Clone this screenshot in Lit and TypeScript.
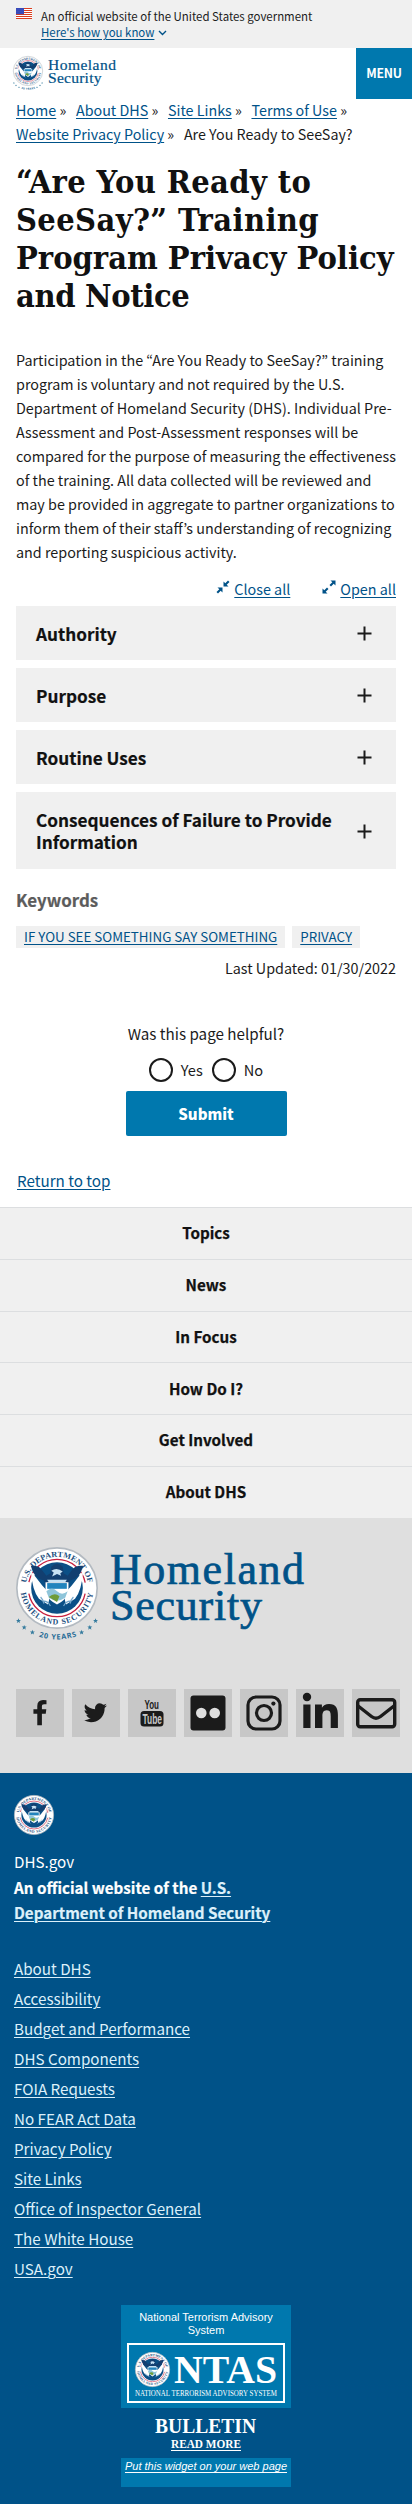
import { LitElement, html, svg, css } from "lit";
import { customElement, property } from "lit/decorators.js";

@customElement("dhs-seal")
class DhsSeal extends LitElement {
  @property({ type: Boolean }) plain = false;

  static styles = css`
    :host { display: block; }
    svg { display: block; width: 100%; height: auto; overflow: visible; }
    .ring { font: 700 9.6px "Liberation Serif", serif; fill: #1b4f80; }
    .years { font: 700 9px "Noto Sans", sans-serif; fill: #2a6d97; }
  `;

  render() {
    return html`<svg viewBox="0 0 100 ${this.plain ? 100 : 118}" aria-label="Department of Homeland Security seal">
      <defs>
        <path id="top" d="M12 50 A38 38 0 0 1 88 50" />
        <path id="bottom" d="M5.5 50 A44.5 44.5 0 0 0 94.5 50" />
        <path id="low" d="M22 107.5 Q50 118 78 107.5" />
      </defs>
      <circle cx="50" cy="50" r="49" fill="#fff" stroke="#b3bac1" stroke-width="2" />
      <text class="ring"><textPath href="#top" startOffset="6" textLength="107" lengthAdjust="spacingAndGlyphs">U.S. DEPARTMENT OF</textPath></text>
      <text class="ring"><textPath href="#bottom" startOffset="6" textLength="127">HOMELAND SECURITY</textPath></text>
      <circle cx="50" cy="50" r="35" fill="#fff" stroke="#c8203f" stroke-width="1.6" stroke-dasharray="96 14" stroke-dashoffset="-7" />
      <circle cx="50" cy="50" r="31.5" fill="#0b4f86" />
      <path d="M18 29 L32 47 L42 58 L39 70 L28 63 Q20 54 18 29Z M82 29 L68 47 L58 58 L61 70 L72 63 Q80 54 82 29Z" fill="#fff" />
      <path d="M18 23 Q22 39 34 41 L39 51 L61 51 L66 41 Q78 39 82 23 Q73 22 69 27 L63 35 L58 32 L57 24 Q50 17 43 24 L42 32 L37 35 L31 27 Q27 22 18 23Z" fill="#123f70" />
      <path d="M43 29 Q50 24 57 30 L54 32 L55 35 L50 33 L44 36 L46 31Z M38 40 h24 l-2 3 h-20z" fill="#c7e2f4" />
      <path d="M36 43 H64 V55 Q60 66 50 70 Q40 66 36 55Z" fill="#fff" />
      <path d="M38 44 H62 V51 H38Z" fill="#2284bd" />
      <path d="M37 54 Q44 48 50 54 T63 54 L60 62 Q50 69 40 62Z" fill="#8fc5da" />
      <path d="M40 61 Q47 55 53 60 L50 67Z" fill="#6f9c38" />
      <path d="M34 66 q5 0 8 6 M66 66 q-5 0 -8 6 M30 61 q3 3 4 8 M70 61 q-3 3 -4 8" fill="none" stroke="#73a6cb" stroke-width="1.4" />
      ${this.plain ? "" : svg`
        <g fill="#357b9e">
          ${[[3, 90], [10, 98], [20, 104], [80, 104], [90, 98], [97, 90]].map(([x, y]) => svg`
            <path transform="translate(${x} ${y})" d="M0-3 .8-1H3L1.3.5 2 2.8 0 1.5-2 2.8-1.3.5-3-1H-.8Z" />`)}
        </g>
        <text class="years"><textPath href="#low" startOffset="6" textLength="47">20 YEARS</textPath></text>`}
    </svg>`;
  }
}

@customElement("app-root")
class AppRoot extends LitElement {
  static styles = css`
    :host {
      display: block;
      width: 412px;
      height: 2504px;
      overflow: hidden;
      background: #fff;
      color: #1b1b1b;
      font: 15.2px/24px "Noto Sans CJK KR", "Noto Sans", sans-serif;
    }
    * { box-sizing: border-box; }
    a { color: #005288; text-decoration: underline; text-underline-offset: 2px; text-decoration-thickness: 1px; }
    h1, h2, p, ul { margin: 0; padding: 0; }
    svg { display: block; overflow: visible; }

    .banner { display: flex; height: 48px; padding: 8px 16px; gap: 9px; background: #f0f0f0; font-size: 11.45px; line-height: 16px; }
    .flag { width: 16px; height: 11px; }
    .know { display: flex; gap: 4px; align-items: center; }
    .know svg { margin-top: 2px; }

    header { display: flex; justify-content: space-between; height: 51px; padding-left: 13px; }
    .brand { display: flex; gap: 4px; padding-top: 8px; }
    .brand dhs-seal { width: 30px; }
    .brandtext { font-family: "Liberation Serif", serif; fill: #005288; stroke: #005288; }
    .menu { display: flex; align-items: center; justify-content: center; width: 56px; height: 51px; padding-bottom: 1px; background: #0078ae; color: #fff; font-weight: 700; font-size: 12.3px; letter-spacing: -.2px; }

    .crumbs { display: flex; flex-wrap: wrap; column-gap: 9.7px; height: 48px; margin: -1.2px 0 0; padding-left: 16px; font-size: 14.3px; }

    h1 { margin-top: 16.8px; padding-left: 16px; font: 700 32.3px/38.2px "DejaVu Serif Condensed", "DejaVu Serif", serif; font-stretch: condensed; color: #111; white-space: nowrap; }
    h1 span { display: block; }
    .wide { letter-spacing: .38px; }
    .tight { letter-spacing: -.35px; }
    .intro { margin: 32.4px 0 0; padding-left: 16px; font-size: 14.35px; white-space: nowrap; }
    .intro span { display: block; }

    .tools { display: flex; justify-content: flex-end; gap: 32px; height: 42.2px; padding: 13px 16px 0 0; font-size: 14.35px; }
    .tools a { display: flex; gap: 4px; align-items: center; height: 24px; text-decoration: none; }
    .tools span { text-decoration: underline; }
    .tools svg { margin-top: -4px; }

    .accordion { display: grid; gap: 8px; margin: 0 16px; }
    .item { display: flex; align-items: center; justify-content: space-between; height: 54px; padding: 1px 24px 0 20px; background: #f0f0f0; color: #111; font-size: 17.2px; line-height: 22px; font-weight: 700; white-space: nowrap; -webkit-text-stroke: .2px #111; }
    .item.tall { height: 77px; }

    .keywords { margin: 19px 16px 0; color: #5c5c5c; font-weight: 700; font-size: 16.9px; line-height: 24px; -webkit-text-stroke: .2px #5c5c5c; }
    .tags { display: flex; gap: 7px; margin: 14px 16px 0; }
    .tag { height: 22px; padding: 0 8px; background: #f0f0f0; font-size: 13.35px; line-height: 21px; white-space: nowrap; }
    .updated { margin: 8px 16px 0; font-size: 14.35px; text-align: right; }
    .helpful { display: flex; flex-direction: column; align-items: center; margin-top: 40.5px; }
    .radios { display: flex; align-items: center; gap: 9px; height: 30px; margin-top: 10.5px; }
    .radio { display: flex; align-items: center; gap: 8px; font-size: 14.6px; }
    .dot { width: 24px; height: 24px; border: 2px solid #1b1b1b; border-radius: 50%; }
    .submit { width: 161px; height: 45px; margin-top: 6px; border: 0; border-radius: 2px; background: #0078ae; color: #fff; font: 900 15px/45px "Noto Sans CJK KR", sans-serif; padding: 0; }
    .return { margin: 31.5px 0 0 17px; height: 39.5px; }

    .nav a { display: flex; align-items: center; justify-content: center; height: 51.75px; padding-bottom: 2px; border-top: 1px solid #dcdee0; background: #f0f0f0; color: #111; text-decoration: none; font-weight: 700; font-size: 15.2px; -webkit-text-stroke: .25px #111; }

    .agency { height: 255.5px; padding: 29px 16px 0; background: #dfdfdf; }
    .lockup { display: flex; gap: 12px; height: 142.5px; }
    .lockup dhs-seal { width: 82px; }
    .social { display: flex; gap: 8px; }
    .social svg { width: 48px; height: 48px; background: #c7c7c7; flex: none; }
    .yt { font-family: "Liberation Sans Narrow", "Liberation Sans", sans-serif; font-weight: 700; }

    .footer { height: 731px; padding: 22px 14px 0; background: #005288; color: #fff; }
    .footer a { color: #dcf0fa; }
    .footer dhs-seal { width: 40px; }
    .identity { margin-top: 14px; line-height: 25.5px; height: 104.3px; white-space: nowrap; }
    .identity b { display: block; -webkit-text-stroke: .2px currentColor; }
    .links { display: grid; grid-auto-rows: 30px; line-height: 30px; list-style: none; }

    .ntas { display: flex; flex-direction: column; align-items: center; width: 170px; margin: 21.7px auto 0; font-family: "Liberation Sans", sans-serif; }
    .card { width: 170px; height: 103px; padding: 6px; background: #0078ae; font-size: 11px; line-height: 13px; text-align: center; }
    .frame { display: grid; grid-template-columns: 35px 1fr; column-gap: 4px; width: 158px; height: 60px; margin-top: 6px; padding: 7px 6px 0; border: 2px solid #fff; }
    .footer .frame dhs-seal { width: 35px; }
    .frame .word:last-child { grid-column: 1 / -1; }
    .word { font-family: "Liberation Serif", serif; fill: #fff; }
    .bulletin { margin-top: 8px; }
    .widget { width: 170px; height: 29px; margin-top: 6px; padding-top: 1px; background: #0078ae; font-size: 11px; line-height: 14px; font-style: italic; text-align: center; white-space: nowrap; }
    .widget a { color: #fff; }
  `;

  private crumbs = ["Home", "About DHS", "Site Links", "Terms of Use", "Website Privacy Policy"];
  private intro = [
    "Participation in the “Are You Ready to SeeSay?” training",
    "program is voluntary and not required by the U.S.",
    "Department of Homeland Security (DHS). Individual Pre-",
    "Assessment and Post-Assessment responses will be",
    "compared for the purpose of measuring the effectiveness",
    "of the training. All data collected will be reviewed and",
    "may be provided in aggregate to partner organizations to",
    "inform them of their staff’s understanding of recognizing",
    "and reporting suspicious activity.",
  ];
  private nav = ["Topics", "News", "In Focus", "How Do I?", "Get Involved", "About DHS"];
  private links = ["About DHS", "Accessibility", "Budget and Performance", "DHS Components", "FOIA Requests", "No FEAR Act Data", "Privacy Policy", "Site Links", "Office of Inspector General", "The White House", "USA.gov"];

  private plus() {
    return html`<svg width="15" height="15" viewBox="0 0 15 15"><path d="M7.5 .5v14M.5 7.5h14" stroke="#1b1b1b" stroke-width="2" /></svg>`;
  }

  private item(label: unknown, tall = false) {
    return html`<div class="item ${tall ? "tall" : ""}"><span>${label}</span>${this.plus()}</div>`;
  }

  private flag() {
    return html`<svg class="flag" viewBox="0 0 16 11">
      <rect width="16" height="11" fill="#fff" />
      ${[0, 2, 4, 6, 8, 10].map((y) => svg`<rect y=${y} width="16" height="1" fill="#db3e1f" />`)}
      <rect width="8" height="6.2" fill="#1e33b1" />
      ${[1, 3, 5].map((y) => [1, 3, 5, 7].map((x) => svg`<circle cx=${x} cy=${y} r=".45" fill="#fff" />`))}
    </svg>`;
  }

  private social() {
    return html`<div class="social">
      <svg viewBox="0 0 48 48"><path transform="translate(10.2 11) scale(.0151)" fill="#1b1b1b" d="M1343 12v264h-157q-86 0-116 36t-30 108v189h293l-39 296h-254v759h-306v-759h-255v-296h255v-218q0-186 104-288.5t277-102.5q147 0 228 12z" /></svg>
      <svg viewBox="0 0 48 48"><path transform="translate(11 10.5) scale(.0148)" fill="#1b1b1b" d="M1620 408q-67 98-162 167 1 14 1 42 0 130-38 259.5t-115.5 248.5-184.5 210.5-258 146-323 54.5q-271 0-496-145 35 4 78 4 225 0 401-138-105-2-188-64.5t-114-159.5q33 5 61 5 43 0 85-11-112-23-185.5-111.5t-73.5-205.5v-4q68 38 146 41-66-44-105-115t-39-154q0-88 44-163 121 149 294.5 238.5t371.5 99.5q-8-38-8-74 0-134 94.5-228.5t228.5-94.5q140 0 236 102 109-21 205-78-37 115-142 178 93-10 186-50z" /></svg>
      <svg class="yt" viewBox="0 0 48 48"><text x="16.5" y="20" font-size="13" fill="#1b1b1b" textLength="14.5" lengthAdjust="spacingAndGlyphs">You</text><rect x="12.5" y="22" width="23" height="15.5" rx="3.5" fill="#1b1b1b" /><text x="14.5" y="35" font-size="14" fill="#c7c7c7" textLength="19.5" lengthAdjust="spacingAndGlyphs">Tube</text></svg>
      <svg viewBox="0 0 48 48"><rect x="6.5" y="6.5" width="35" height="35" rx="3" fill="#1b1b1b" /><circle cx="17.3" cy="24" r="5.3" fill="#dedede" /><circle cx="30.7" cy="24" r="5.3" fill="#dedede" /></svg>
      <svg viewBox="0 0 48 48"><rect x="8" y="8" width="32" height="32" rx="8" fill="none" stroke="#1b1b1b" stroke-width="3.2" /><circle cx="24" cy="24" r="7.5" fill="none" stroke="#1b1b1b" stroke-width="3.2" /><circle cx="33.4" cy="14.6" r="2.1" fill="#1b1b1b" /></svg>
      <svg viewBox="0 0 48 48"><circle cx="11" cy="8" r="4.2" fill="#1b1b1b" /><path fill="#1b1b1b" d="M7.3 15.5h7.2V39H7.3zM19 15.5h6.9v3.2c1.2-2.2 3.7-3.8 7.2-3.8 7 0 8.8 4.5 8.8 11V39h-7.2V27.2c0-3 -.2-6-3.9-6s-4.4 2.9-4.4 6V39H19z" /></svg>
      <svg viewBox="0 0 48 48"><rect x="5.7" y="10.7" width="37" height="27" rx="2.5" fill="none" stroke="#1b1b1b" stroke-width="3.4" /><path d="M5.5 16.5 19.5 27.5Q24 31 28.5 27.5L42.5 16.5" fill="none" stroke="#1b1b1b" stroke-width="3.4" /></svg>
    </div>`;
  }

  render() {
    return html`
      <section class="banner">
        ${this.flag()}
        <div>
          <div>An official website of the United States government</div>
          <div class="know"><a href="#">Here's how you know</a><svg width="9" height="6" viewBox="0 0 9 6"><path d="M1 1l3.5 3.5L8 1" fill="none" stroke="#005288" stroke-width="1.4" /></svg></div>
        </div>
      </section>
      <header>
        <div class="brand">
          <dhs-seal></dhs-seal>
          <svg class="brandtext" width="70" height="34" viewBox="0 0 70 34" stroke-width=".2">
            <text x="1" y="14" font-size="15.6" textLength="68">Homeland</text>
            <text x="1" y="27" font-size="15.6" textLength="53.5">Security</text>
          </svg>
        </div>
        <div class="menu">MENU</div>
      </header>
      <nav class="crumbs">
        ${this.crumbs.map((c) => html`<span><a href="#">${c}</a> »</span>`)}
        <span>Are You Ready to SeeSay?</span>
      </nav>
      <h1><span class="wide">“Are You Ready to</span><span class="wide">SeeSay?” Training</span><span>Program Privacy Policy</span><span class="tight">and Notice</span></h1>
      <p class="intro">${this.intro.map((l) => html`<span>${l}</span>`)}</p>
      <div class="tools">
        <a href="#"><svg width="14" height="14" viewBox="0 0 14 14"><path d="M7.5 1.5v5h5l-1.8-1.8L13.5 2 12 .5 9.3 3.3zM6.5 12.5v-5h-5l1.8 1.8L.5 12 2 13.5l2.7-2.8z" fill="#005288" /></svg><span>Close all</span></a>
        <a href="#"><svg width="14" height="14" viewBox="0 0 14 14"><path d="M13.5.5v5l-1.8-1.8L9 6.5 7.5 5l2.8-2.7L8.5.5zM.5 13.5v-5l1.8 1.8L5 7.5 6.5 9l-2.8 2.7 1.8 1.8z" fill="#005288" /></svg><span>Open all</span></a>
      </div>
      <div class="accordion">
        ${this.item("Authority")}${this.item("Purpose")}${this.item("Routine Uses")}
        ${this.item(html`Consequences of Failure to Provide<br />Information`, true)}
      </div>
      <h2 class="keywords">Keywords</h2>
      <div class="tags"><span class="tag"><a href="#">IF YOU SEE SOMETHING SAY SOMETHING</a></span><span class="tag"><a href="#">PRIVACY</a></span></div>
      <p class="updated">Last Updated: 01/30/2022</p>
      <div class="helpful">
        <div>Was this page helpful?</div>
        <div class="radios"><label class="radio"><span class="dot"></span>Yes</label><label class="radio"><span class="dot"></span>No</label></div>
        <button class="submit">Submit</button>
      </div>
      <div class="return"><a href="#">Return to top</a></div>
      <nav class="nav">${this.nav.map((n) => html`<a href="#">${n}</a>`)}</nav>
      <section class="agency">
        <div class="lockup">
          <dhs-seal></dhs-seal>
          <svg class="brandtext" width="200" height="90" viewBox="0 0 200 90" stroke-width=".7">
            <text x="0" y="37" font-size="44" textLength="194">Homeland</text>
            <text x="0" y="72.5" font-size="44" textLength="152">Security</text>
          </svg>
        </div>
        ${this.social()}
      </section>
      <footer class="footer">
        <dhs-seal plain></dhs-seal>
        <div class="identity">DHS.gov<b>An official website of the <a href="#">U.S.</a></b><b><a href="#">Department of Homeland Security</a></b></div>
        <ul class="links">${this.links.map((l) => html`<li><a href="#">${l}</a></li>`)}</ul>
        <div class="ntas">
          <div class="card">National Terrorism Advisory System
            <div class="frame">
              <dhs-seal plain></dhs-seal>
              <svg class="word" width="106" height="34" viewBox="0 0 106 34"><text x="0" y="31" font-size="41" font-weight="700" textLength="103" lengthAdjust="spacingAndGlyphs">NTAS</text></svg>
              <svg class="word" width="144" height="12" viewBox="0 0 144 12"><text x="0" y="8" font-size="7.8" textLength="142" lengthAdjust="spacingAndGlyphs">NATIONAL TERRORISM ADVISORY SYSTEM</text></svg>
            </div>
          </div>
          <svg class="word bulletin" width="110" height="36" viewBox="0 0 110 36">
            <text x="4" y="17" font-size="22" font-weight="700" textLength="101" lengthAdjust="spacingAndGlyphs">BULLETIN</text>
            <text x="20" y="32" font-size="12.5" font-weight="700" textLength="70" lengthAdjust="spacingAndGlyphs">READ MORE</text>
            <path d="M20 34.5h70" stroke="#fff" />
          </svg>
          <div class="widget"><a href="#">Put this widget on your web page</a></div>
        </div>
      </footer>
    `;
  }
}
